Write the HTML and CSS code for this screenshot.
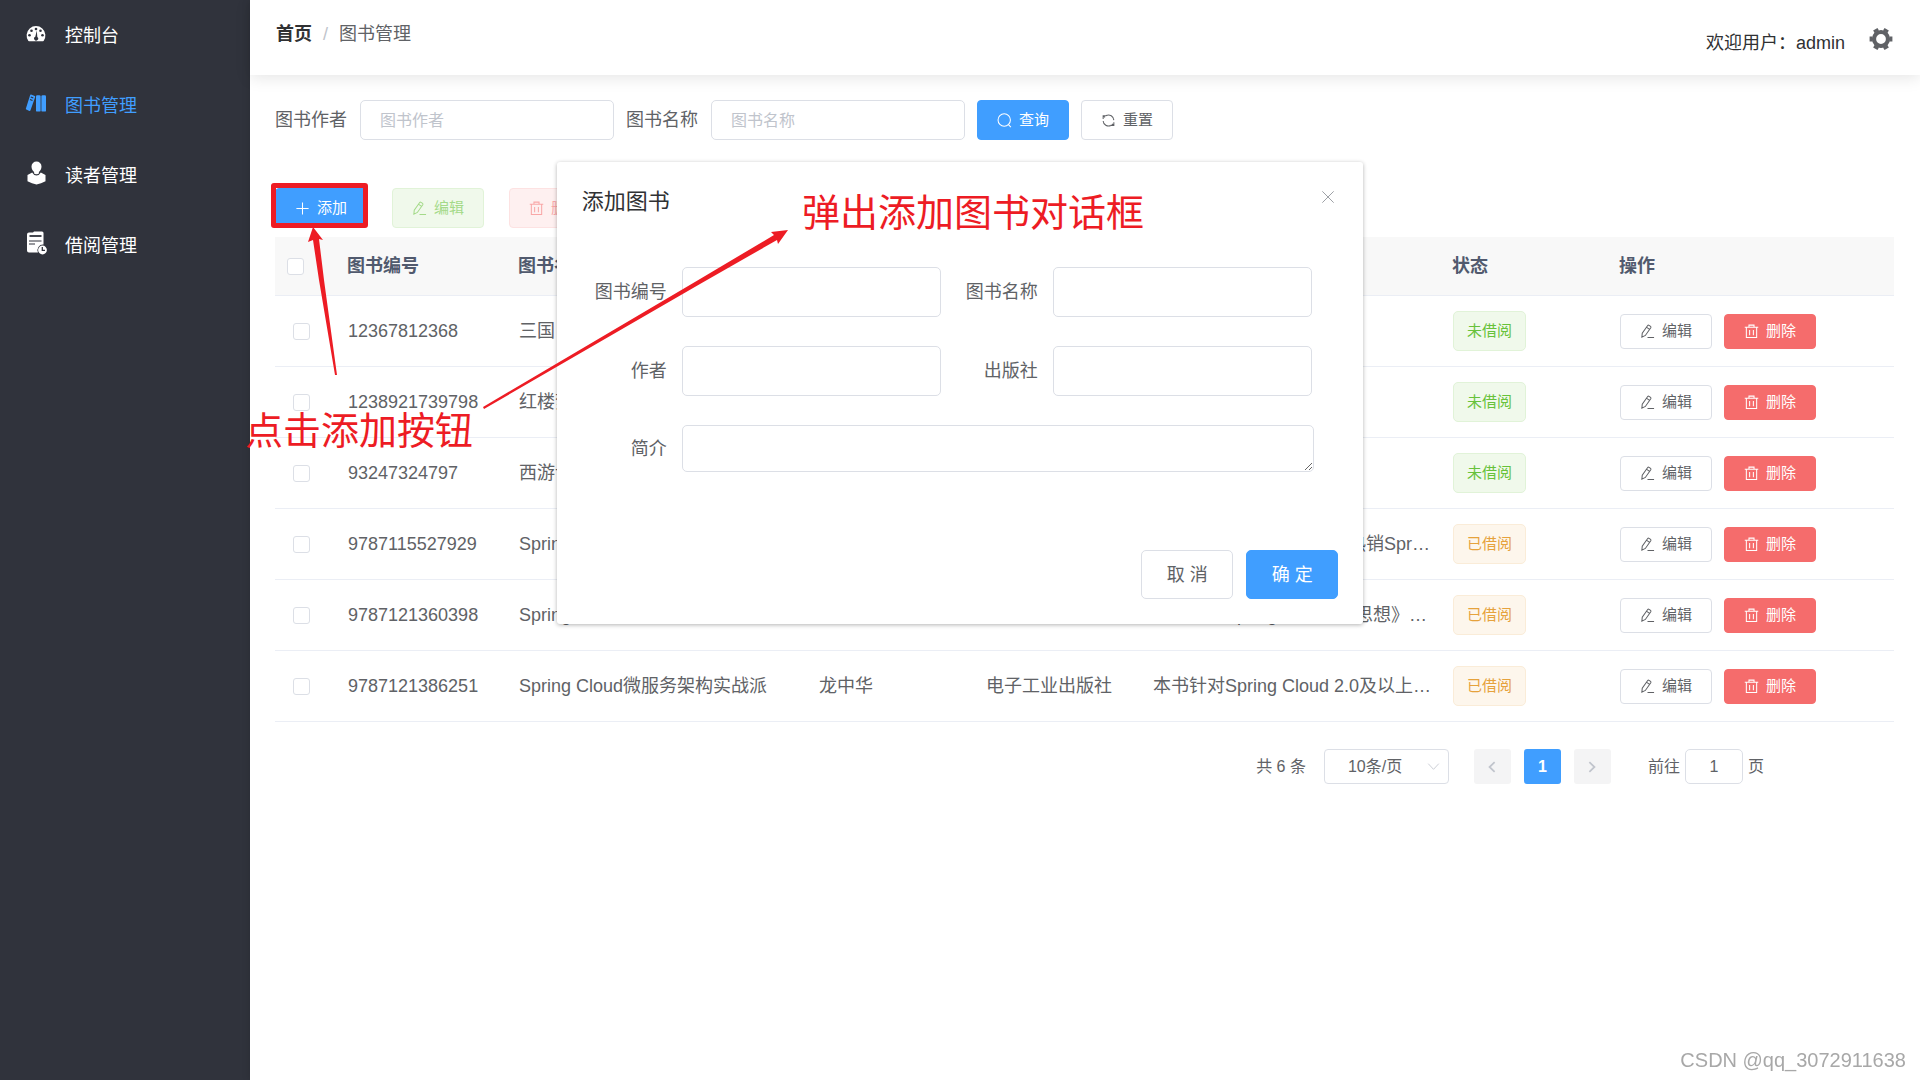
FILE: index.html
```html
<!DOCTYPE html>
<html lang="zh-CN">
<head>
<meta charset="utf-8">
<meta name="viewport" content="width=device-width, initial-scale=1">
<title>图书管理</title>
<link rel="stylesheet" href="styles.css">
</head>
<body>
<svg class="sprite" aria-hidden="true">
  <symbol id="i-plus" viewBox="0 0 16 16"><path d="M8 1.5v13M1.5 8h13"/></symbol>
  <symbol id="i-edit" viewBox="0 0 16 16"><path d="M2 14l.4-4.2L8.200 1.600q.6-.7 1.400-.2l1.700 1.200q.7.6.2 1.400L5.700 12.200zM7.200 3.600l3 2.200M8 14.300h7"/></symbol>
  <symbol id="i-delete" viewBox="0 0 16 16"><path d="M.8 3.500h14.400M5.300 3.300V1.200h5.400v2.100M2.500 3.700v10.800h11V3.700M6 6.300v5.600M10 6.300v5.600"/></symbol>
  <symbol id="i-search" viewBox="0 0 16 16"><circle cx="7.700" cy="7.500" r="6.600"/><path d="M12.200 12.400l2.600 2.700"/></symbol>
  <symbol id="i-refresh" viewBox="0 0 16 16"><path d="M5.500 2.600a5.800 5.800 0 0 1 8.200 5M2.300 8.500a5.800 5.800 0 0 0 8.200 4.900M2.300 6.500V3h3.400M13.700 9.800v3.400h-3.500M2.300 3l2 1.600M13.700 13.200L11.700 11.500"/></symbol>
  <symbol id="i-close" viewBox="0 0 16 16"><path d="M1.500 1.500l13 13M14.500 1.500l-13 13"/></symbol>
  <symbol id="i-down" viewBox="0 0 16 16"><path d="M1.500 4.500L8 11.500l6.500-7"/></symbol>
  <symbol id="i-left" viewBox="0 0 16 16"><path d="M11 2.500L5.200 8l5.800 5.500"/></symbol>
  <symbol id="i-right" viewBox="0 0 16 16"><path d="M5 2.500L10.800 8 5 13.500"/></symbol>
</svg>

<div class="app">
  <nav class="sidebar">
    <a class="menu-item" href="#">
      <svg class="menu-icon" viewBox="0 0 24 24"><path fill="currentColor" d="M4.400 18A9.400 9.400 0 1 1 19.600 18Q19 18.300 18 18.300H6q-1 0-1.600-.3z"/><g fill="#30333c"><circle cx="12" cy="6" r="1.300"/><circle cx="7.500" cy="7.800" r="1.300"/><circle cx="16.500" cy="7.800" r="1.300"/><circle cx="5.500" cy="12.300" r="1.300"/><circle cx="18.500" cy="12.300" r="1.300"/><path d="M12.800 7.500l.5 6.500a2 2 0 1 1-2-.2z"/></g></svg>
      <span>控制台</span></a>
    <a class="menu-item active" href="#">
      <svg class="menu-icon" viewBox="0 0 24 24"><path fill="currentColor" d="M7 1.600l3.800 1.300q.6.3.4 1L6.500 17.300q-.3.800-1.100.6L2.300 16.600q-.7-.3-.4-1L6.100 2.200q.2-.7.9-.6z"/><rect x="12" y="2.200" width="4.600" height="16.400" rx="1.200" fill="currentColor"/><rect x="17.400" y="2.200" width="4.600" height="16.400" rx="1.200" fill="currentColor"/><path d="M6.800 4l2.500 1M6 6.500l2.500 1" stroke="#30333c" stroke-width="1.100"/></svg>
      <span>图书管理</span></a>
    <a class="menu-item" href="#">
      <svg class="menu-icon" viewBox="0 0 24 24"><path fill="currentColor" d="M12.500-1.500a5 5 0 0 1 5 5c0 2.400-1.200 4.500-2.600 5.500v1.300q0 1-2.400 1t-2.400-1V9C8.700 8 7.500 5.900 7.500 3.500a5 5 0 0 1 5-5zM3.500 12l4.700-2.400q1.600 3 4.300 3t4.300-3L21.500 12v6.300L17 20.300 12.500 21.500 8 20.300l-4.500-2z"/></svg>
      <span>读者管理</span></a>
    <a class="menu-item" href="#">
      <svg class="menu-icon" viewBox="0 0 24 24"><path fill="currentColor" d="M5-.5h4l1-1h8q1.500 0 1.500 1.500v11.500a5.600 5.600 0 0 0-5.500 8H5q-2 0-2-2v-16q0-2 2-2z"/><path d="M5.500 3h12" stroke="#30333c" stroke-width="1.800"/><path d="M5 8h12.500M5 11h6" stroke="#30333c" stroke-width="1.100"/><circle cx="18.500" cy="17" r="4.400" fill="currentColor"/><path d="M18.300 14v3.300h2.700" fill="none" stroke="#30333c" stroke-width="1.300"/></svg>
      <span>借阅管理</span></a>
  </nav>

  <div class="page">
    <header class="topbar">
      <nav class="crumbs"><a href="#">首页</a><span class="slash">/</span><span>图书管理</span></nav>
      <div class="user"><span class="welcome">欢迎用户：admin</span>
        <button class="gear" type="button" aria-label="设置"><svg viewBox="0 0 24 24"><circle cx="12" cy="12" r="7" fill="none" stroke="currentColor" stroke-width="4.200"/><path fill="none" stroke="currentColor" stroke-width="5" d="M.6 12h3M20.400 12h3M6.300 2.130l1.500 2.600M16.200 19.270l1.500 2.600M17.700 2.130l-1.500 2.600M7.800 19.270l-1.500 2.600"/></svg></button></div>
    </header>

    <main class="content">
      <form class="search">
        <label for="q-author">图书作者</label><input id="q-author" type="text" placeholder="图书作者">
        <label for="q-name">图书名称</label><input id="q-name" type="text" placeholder="图书名称">
        <button class="btn primary" type="button"><svg><use href="#i-search"/></svg>查询</button>
        <button class="btn" type="button"><svg><use href="#i-refresh"/></svg>重置</button>
      </form>

      <div class="toolbar">
        <button class="btn primary" type="button"><svg><use href="#i-plus"/></svg>添加</button>
        <button class="btn success" type="button" disabled><svg><use href="#i-edit"/></svg>编辑</button>
        <button class="btn danger-plain" type="button" disabled><svg><use href="#i-delete"/></svg>删除</button>
      </div>

      <table class="books">
        <colgroup><col class="c-check"><col class="c-id"><col class="c-name"><col class="c-mid"><col class="c-mid"><col class="c-name"><col class="c-mid"><col class="c-ops"></colgroup>
        <thead><tr><th><input type="checkbox" aria-label="全选"></th><th>图书编号</th><th>图书名称</th><th>作者</th><th>出版社</th><th>简介</th><th>状态</th><th>操作</th></tr></thead>
        <tbody>
          <tr><td><input type="checkbox" aria-label="选择"></td><td>12367812368</td><td>三国 演义</td><td>罗贯中</td><td>人民出版社</td><td>三国演义</td><td><span class="tag free">未借阅</span></td><td><div class="ops"><button class="btn small" type="button"><svg><use href="#i-edit"/></svg>编辑</button><button class="btn small danger" type="button"><svg><use href="#i-delete"/></svg>删除</button></div></td></tr>
          <tr><td><input type="checkbox" aria-label="选择"></td><td>1238921739798</td><td>红楼梦</td><td>曹雪芹</td><td>人民出版社</td><td>红楼梦</td><td><span class="tag free">未借阅</span></td><td><div class="ops"><button class="btn small" type="button"><svg><use href="#i-edit"/></svg>编辑</button><button class="btn small danger" type="button"><svg><use href="#i-delete"/></svg>删除</button></div></td></tr>
          <tr><td><input type="checkbox" aria-label="选择"></td><td>93247324797</td><td>西游记</td><td>吴承恩</td><td>人民出版社</td><td>西游记</td><td><span class="tag free">未借阅</span></td><td><div class="ops"><button class="btn small" type="button"><svg><use href="#i-edit"/></svg>编辑</button><button class="btn small danger" type="button"><svg><use href="#i-delete"/></svg>删除</button></div></td></tr>
          <tr><td><input type="checkbox" aria-label="选择"></td><td>9787115527929</td><td>Spring实战</td><td>沃尔斯</td><td>人民邮电出版社</td><td>本书第 5版是广受好评的热销Spring图书</td><td><span class="tag lent">已借阅</span></td><td><div class="ops"><button class="btn small" type="button"><svg><use href="#i-edit"/></svg>编辑</button><button class="btn small danger" type="button"><svg><use href="#i-delete"/></svg>删除</button></div></td></tr>
          <tr><td><input type="checkbox" aria-label="选择"></td><td>9787121360398</td><td>Spring Boot编程思想</td><td>小马哥</td><td>电子工业出版社</td><td>本书是《Spring Boot编程思想》的核心篇</td><td><span class="tag lent">已借阅</span></td><td><div class="ops"><button class="btn small" type="button"><svg><use href="#i-edit"/></svg>编辑</button><button class="btn small danger" type="button"><svg><use href="#i-delete"/></svg>删除</button></div></td></tr>
          <tr><td><input type="checkbox" aria-label="选择"></td><td>9787121386251</td><td>Spring Cloud微服务架构实战派</td><td>龙中华</td><td>电子工业出版社</td><td>本书针对Spring Cloud 2.0及以上版本</td><td><span class="tag lent">已借阅</span></td><td><div class="ops"><button class="btn small" type="button"><svg><use href="#i-edit"/></svg>编辑</button><button class="btn small danger" type="button"><svg><use href="#i-delete"/></svg>删除</button></div></td></tr>
        </tbody>
      </table>

      <div class="pager">
        <span>共 6 条</span>
        <div class="size"><select aria-label="每页条数"><option>10条/页</option></select><svg><use href="#i-down"/></svg></div>
        <div class="pages">
          <button type="button" disabled aria-label="上一页"><svg><use href="#i-left"/></svg></button>
          <button type="button" class="current">1</button>
          <button type="button" disabled aria-label="下一页"><svg><use href="#i-right"/></svg></button>
        </div>
        <label class="jump">前往<input type="text" value="1">页</label>
      </div>
    </main>
  </div>
</div>

<section class="dialog" role="dialog" aria-labelledby="dialog-title">
  <div class="dialog-head"><h2 id="dialog-title">添加图书</h2>
    <button class="close" type="button" aria-label="关闭"><svg><use href="#i-close"/></svg></button></div>
  <form class="dialog-form">
    <div class="field"><label for="f-id">图书编号</label><input id="f-id" type="text"></div>
    <div class="field"><label for="f-name">图书名称</label><input id="f-name" type="text"></div>
    <div class="field"><label for="f-author">作者</label><input id="f-author" type="text"></div>
    <div class="field"><label for="f-press">出版社</label><input id="f-press" type="text"></div>
    <div class="field wide"><label for="f-intro">简介</label><textarea id="f-intro"></textarea></div>
  </form>
  <div class="dialog-foot">
    <button class="btn large" type="button">取 消</button>
    <button class="btn large primary" type="button">确 定</button>
  </div>
</section>

<div class="notes">
  <span class="note-box"></span>
  <svg class="note-arrows"><path d="M313 227L323 240 319 239 324 280 337 375H335L319 280 313 240 308 242zM788 230L778 244 777 240 700 284 484 409 483 407 700 279 774 235 771 232z"/></svg>
  <p class="note note-click">点击添加按钮</p>
  <p class="note note-popup">弹出添加图书对话框</p>
</div>
<p class="watermark">CSDN @qq_3072911638</p>
</body>
</html>
```
FILE: styles.css
```css
* { box-sizing: border-box; }
body {
  margin: 0;
  font: 18px/24px "Liberation Sans", "Noto Sans CJK SC", sans-serif;
  color: #606266;
  background: #fff;
}
a { color: inherit; text-decoration: none; }
h2, p { margin: 0; }
button, input, select, textarea { font: inherit; color: inherit; margin: 0; }
.sprite { display: none; }
svg { fill: none; stroke: currentColor; }

.app { display: flex; min-height: 100vh; }
.sidebar {
  flex: none;
  width: 250px;
  background: #30333c;
  color: #fff;
}
.menu-item {
  display: flex;
  align-items: center;
  gap: 17px;
  height: 70px;
  padding-left: 24px;
}
.menu-item span { padding-top: 2px; }
.menu-item.active { color: #409eff; }
.menu-icon { width: 24px; height: 24px; overflow: visible; stroke: none; }

.page { flex: 1; min-width: 0; box-shadow: 0 0 8px rgba(0, 0, 0, .15); }
.topbar {
  display: flex;
  justify-content: space-between;
  height: 75px;
  padding: 22px 27px 0 26px;
  box-shadow: 0 3px 15px rgba(0, 0, 0, .1);
}
.crumbs { display: flex; gap: 11px; }
.crumbs a { font-weight: 700; color: #303133; }
.slash { color: #c0c4cc; }
.user { display: flex; gap: 24px; color: #303133; }
.welcome { padding-top: 9px; }
.gear { width: 24px; height: 24px; margin-top: 5px; padding: 0; border: 0; background: none; color: #606266; }
.gear svg { display: block; width: 24px; height: 24px; stroke: none; }

.content { padding: 25px 26px 25px 25px; }
.search { display: flex; align-items: center; }
.search label { margin-right: 13px; }
input[type="text"], textarea, select {
  border: 1px solid #dcdfe6;
  border-radius: 5px;
  background: #fff;
  outline: 0;
}
.search input { width: 254px; height: 40px; margin-right: 12px; padding: 2px 18px 0 19px; font-size: 16px; }
::placeholder { color: #c0c4cc; opacity: 1; }

.btn {
  display: inline-flex;
  align-items: center;
  justify-content: center;
  gap: 7px;
  height: 40px;
  padding: 0 19px;
  border: 1px solid #dcdfe6;
  border-radius: 4px;
  background: #fff;
  font-size: 15px;
  line-height: 20px;
  white-space: nowrap;
}
.btn svg { width: 15px; height: 15px; stroke-width: 1.1; }
.btn + .btn { margin-left: 12px; }
.btn.small { height: 35px; }
.btn.large { width: 92px; height: 49px; padding: 0; border-radius: 5px; font-size: 18px; }
.dialog-foot .btn + .btn { margin-left: 13px; }
.btn.primary { color: #fff; background: #409eff; border-color: #409eff; }
.btn.danger { color: #fff; background: #f56c6c; border-color: #f56c6c; }
.btn.success { color: #a4da89; background: #f0f9eb; border-color: #e1f3d8; }
.btn.danger-plain { color: #f9a7a7; background: #fef0f0; border-color: #fde2e2; }

.toolbar { display: flex; gap: 25px; margin: 48px 0 9px; }
.toolbar .btn + .btn { margin-left: 0; }

.books { width: 100%; table-layout: fixed; border-collapse: separate; border-spacing: 0; }
.c-check { width: 60px; }
.c-id { width: 171px; }
.c-name { width: 300px; }
.c-mid { width: 167px; }
.c-ops { width: 287px; }
th, td {
  padding: 0 8px 0 13px;
  border-bottom: 1px solid #ebeef5;
  text-align: left;
  white-space: nowrap;
  overflow: hidden;
  text-overflow: ellipsis;
}
th { height: 59px; padding-left: 12px; background: #f8f8f8; color: #515a6e; }
td { height: 71px; }
td:first-child { padding-left: 18px; }
input[type="checkbox"] {
  appearance: none;
  display: block;
  width: 17px;
  height: 17px;
  border: 1px solid #dcdfe6;
  border-radius: 3px;
  background: #fff;
}
.tag {
  display: inline-block;
  height: 40px;
  padding: 0 13px;
  border: 1px solid;
  border-radius: 5px;
  font-size: 15px;
  line-height: 38px;
  vertical-align: middle;
}
.tag.free { color: #67c23a; background: #f0f9eb; border-color: #e1f3d8; }
.tag.lent { color: #e6a23c; background: #fdf6ec; border-color: #faecd8; }
.ops { display: flex; }

.pager {
  display: flex;
  align-items: center;
  justify-content: flex-end;
  margin-top: 27px;
  padding-right: 130px;
  font-size: 16px;
}
.size { position: relative; margin: 0 25px 0 18px; }
.size select { display: block; appearance: none; width: 125px; height: 35px; padding: 0 23px; border-radius: 4px; }
.size svg { position: absolute; right: 9px; top: 11px; width: 13px; height: 13px; color: #c0c4cc; }
.pages { display: flex; gap: 13px; margin-right: 37px; }
.pages button {
  display: grid;
  place-items: center;
  width: 37px;
  height: 35px;
  padding: 0;
  border: 0;
  border-radius: 3px;
  background: #f4f4f5;
  color: #c0c4cc;
}
.pages svg { width: 14px; height: 14px; stroke-width: 2; }
.pages .current { background: #409eff; color: #fff; font-weight: 700; }
.jump { display: flex; align-items: center; gap: 5px; }
.jump input { width: 58px; height: 35px; padding: 0; text-align: center; }

.dialog {
  position: absolute;
  top: 15vh;
  left: 29%;
  width: 42%;
  padding: 25px;
  border-radius: 3px;
  background: #fff;
  box-shadow: 0 1px 4px rgba(0, 0, 0, .3);
}
.dialog-head { display: flex; justify-content: space-between; }
.dialog h2 { font-size: 22px; line-height: 30px; font-weight: 400; color: #303133; }
.close { width: 20px; height: 20px; padding: 3px; border: 0; background: none; color: #909399; }
.close svg { display: block; width: 14px; height: 14px; }
.dialog-form { display: flex; flex-wrap: wrap; gap: 29px 12px; margin: 50px 24px 78px 0; }
.field { display: flex; align-items: center; gap: 15px; width: 49%; }
.field.wide { width: 100%; }
.field label { flex: none; width: 85px; text-align: right; }
.field input { flex: 1; min-width: 0; height: 50px; padding: 0 18px; }
.field textarea { flex: 1; display: block; height: 47px; padding: 6px 18px; resize: vertical; }
.dialog-foot { display: flex; justify-content: flex-end; }

.notes { position: absolute; top: 0; left: 0; pointer-events: none; color: #ed1c24; }
.note-box { position: absolute; left: 271px; top: 183px; width: 97px; height: 45px; border: 5px solid; border-radius: 3px; }
.note-arrows { position: absolute; top: 0; left: 0; width: 800px; height: 420px; fill: currentColor; stroke: none; }
.note { position: absolute; font-size: 38px; line-height: 44px; white-space: nowrap; }
.note-click { left: 245px; top: 409px; }
.note-popup { left: 802px; top: 191px; }
.watermark {
  position: fixed;
  right: 14px;
  bottom: 8px;
  font-size: 20px;
  color: #a8a8a8;
  text-shadow: 1px 1px 1px #fff;
}
```
